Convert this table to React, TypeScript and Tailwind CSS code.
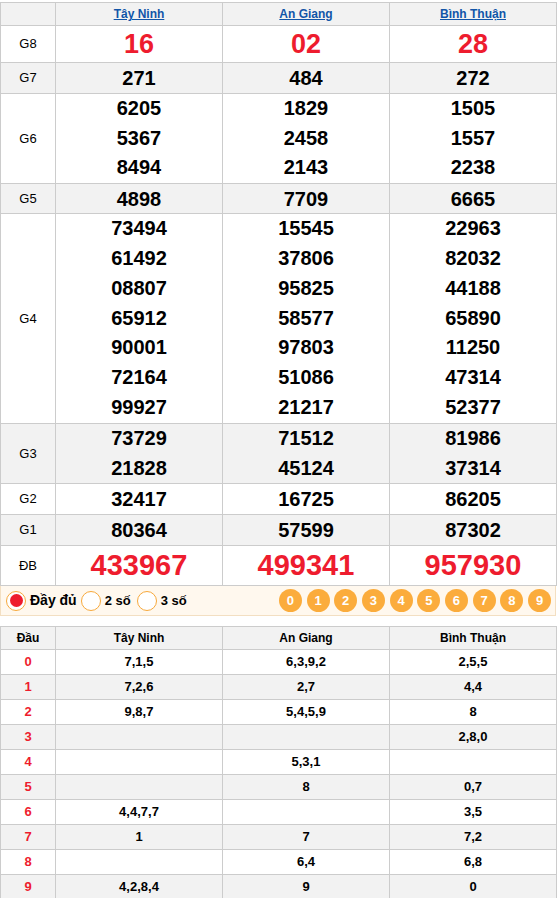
const provinces = ["Tây Ninh", "An Giang", "Bình Thuận"];

type Row = { label: string; vals: string[][]; big?: "g8" | "db"; h: number };

const rows: Row[] = [
  { label: "G8", vals: [["16"], ["02"], ["28"]], big: "g8", h: 37 },
  { label: "G7", vals: [["271"], ["484"], ["272"]], h: 31 },
  {
    label: "G6",
    vals: [
      ["6205", "5367", "8494"],
      ["1829", "2458", "2143"],
      ["1505", "1557", "2238"],
    ],
    h: 90,
  },
  { label: "G5", vals: [["4898"], ["7709"], ["6665"]], h: 30 },
  {
    label: "G4",
    vals: [
      ["73494", "61492", "08807", "65912", "90001", "72164", "99927"],
      ["15545", "37806", "95825", "58577", "97803", "51086", "21217"],
      ["22963", "82032", "44188", "65890", "11250", "47314", "52377"],
    ],
    h: 210,
  },
  {
    label: "G3",
    vals: [
      ["73729", "21828"],
      ["71512", "45124"],
      ["81986", "37314"],
    ],
    h: 60,
  },
  { label: "G2", vals: [["32417"], ["16725"], ["86205"]], h: 31 },
  { label: "G1", vals: [["80364"], ["57599"], ["87302"]], h: 31 },
  { label: "ĐB", vals: [["433967"], ["499341"], ["957930"]], big: "db", h: 40 },
];

const loto: string[][] = [
  ["7,1,5", "6,3,9,2", "2,5,5"],
  ["7,2,6", "2,7", "4,4"],
  ["9,8,7", "5,4,5,9", "8"],
  ["", "", "2,8,0"],
  ["", "5,3,1", ""],
  ["", "8", "0,7"],
  ["4,4,7,7", "", "3,5"],
  ["1", "7", "7,2"],
  ["", "6,4", "6,8"],
  ["4,2,8,4", "9", "0"],
];

export default function App() {
  return (
    <div className="w-[557px] bg-white pt-[2px] font-['Liberation_Sans',Arial,sans-serif] text-black">
      {/* KẾT QUẢ */}
      <table className="w-[556px] table-fixed border-collapse">
        <colgroup>
          <col className="w-[55px]" />
          <col className="w-[167px]" />
          <col className="w-[167px]" />
          <col className="w-[167px]" />
        </colgroup>
        <thead>
          <tr className="h-[23px] bg-[#f2f2f2]">
            <th className="border border-[#cccccc]"></th>
            {provinces.map((p) => (
              <th key={p} className="border border-[#cccccc] p-0 text-center text-[12px] font-bold">
                <a href="#" className="text-[#1155a8] underline">
                  {p}
                </a>
              </th>
            ))}
          </tr>
        </thead>
        <tbody>
          {rows.map((r, i) => (
            <tr
              key={r.label}
              style={{ height: r.h }}
              className={i % 2 === 1 ? "bg-[#f2f2f2]" : "bg-white"}
            >
              <td className="border border-[#cccccc] p-0 text-center text-[13px]">{r.label}</td>
              {r.vals.map((v, j) => (
                <td key={j} className="border border-[#cccccc] p-0 text-center font-bold">
                  {v.map((n) => (
                    <div
                      key={n}
                      style={v.length > 1 ? { lineHeight: `${(r.h - 1) / v.length}px` } : undefined}
                      className={
                        r.big === "g8"
                          ? "text-[27px] leading-[34px] text-[#ee1c2e]"
                          : r.big === "db"
                          ? "text-[29px] leading-[37px] text-[#ee1c2e]"
                          : "text-[20px] leading-[28px]"
                      }
                    >
                      {n}
                    </div>
                  ))}
                </td>
              ))}
            </tr>
          ))}
        </tbody>
      </table>

      {/* BỘ LỌC */}
      <div className="flex h-[30px] w-[556px] items-center justify-between border border-t-0 border-[#f3dfc2] bg-[#fff8ee]">
        <div className="flex items-center pl-[5px] text-[14px] font-bold">
          <label className="flex items-center gap-[4px]">
            <span className="flex h-[20px] w-[20px] items-center justify-center rounded-full border border-[#f7a93c] bg-white">
              <span className="h-[13px] w-[13px] rounded-full bg-[#ee1c2e]" />
            </span>
            <span>Đầy đủ</span>
          </label>
          <label className="ml-[4px] flex items-center gap-[4px] text-[13px]">
            <span className="h-[20px] w-[20px] rounded-full border border-[#f7a93c] bg-white" />
            <span>2 số</span>
          </label>
          <label className="ml-[6px] flex items-center gap-[4px] text-[13px]">
            <span className="h-[20px] w-[20px] rounded-full border border-[#f7a93c] bg-white" />
            <span>3 số</span>
          </label>
        </div>
        <div className="flex gap-[4.7px] pr-[4px]">
          {[0, 1, 2, 3, 4, 5, 6, 7, 8, 9].map((d) => (
            <span
              key={d}
              className="flex h-[23px] w-[23px] items-center justify-center rounded-full bg-[#fbac3c] text-[13px] font-bold text-white"
            >
              {d}
            </span>
          ))}
        </div>
      </div>

      {/* LOTO ĐẦU */}
      <table className="mt-[10px] w-[556px] table-fixed border-collapse">
        <colgroup>
          <col className="w-[55px]" />
          <col className="w-[167px]" />
          <col className="w-[167px]" />
          <col className="w-[167px]" />
        </colgroup>
        <thead>
          <tr className="h-[23px] bg-[#f2f2f2] text-[12px] font-bold">
            <th className="border border-[#cccccc] p-0">Đầu</th>
            {provinces.map((p) => (
              <th key={p} className="border border-[#cccccc] p-0">
                {p}
              </th>
            ))}
          </tr>
        </thead>
        <tbody>
          {loto.map((r, i) => (
            <tr key={i} className={`h-[25px] ${i % 2 === 1 ? "bg-[#f2f2f2]" : "bg-white"}`}>
              <td className="border border-[#cccccc] p-0 text-center text-[13px] font-bold text-[#ee1c2e]">
                {i}
              </td>
              {r.map((v, j) => (
                <td key={j} className="border border-[#cccccc] p-0 text-center text-[13px] font-bold">
                  {v}
                </td>
              ))}
            </tr>
          ))}
        </tbody>
      </table>
    </div>
  );
}
